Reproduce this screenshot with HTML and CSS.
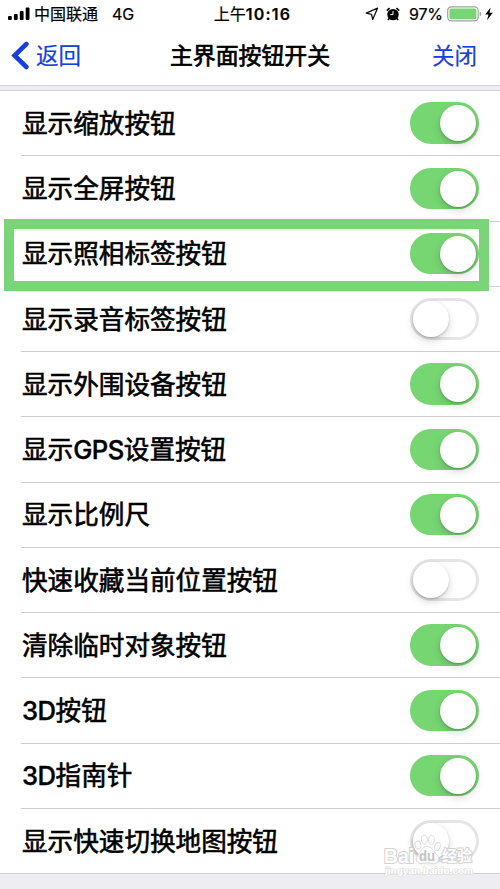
FILE: index.html
```html
<!DOCTYPE html>
<html lang="zh-CN">
<head>
<meta charset="utf-8">
<title>主界面按钮开关</title>
<link rel="stylesheet" href="styles.css">
</head>
<body>
<div class="status">
  <div class="carrier">
    <svg class="signal" width="22" height="14" viewBox="0 0 22 14"><rect x="0" y="9" width="3.8" height="4" rx="1"/><rect x="5.9" y="7" width="3.8" height="6" rx="1"/><rect x="11.8" y="4" width="3.8" height="9" rx="1"/><rect x="17.7" y="0.5" width="3.8" height="12.5" rx="1"/></svg>
    <span>中国联通</span><span class="net">4G</span>
  </div>
  <div class="time">上午<b>10:16</b></div>
  <div class="indicators">
    <svg class="arrow" width="14" height="14" viewBox="0 0 14 14"><path d="M1.2 6.2 12.5 1.2 7.7 12.4 6.5 7.3Z" fill="none" stroke="#111" stroke-width="1.3" stroke-linejoin="round"/></svg>
    <svg class="alarm" width="14" height="14" viewBox="0 0 14 14"><circle cx="7" cy="7.6" r="5.7"/><path d="M.8 3.6 3.6 1.1M13.2 3.6 10.4 1.1M3.2 11.5 1.9 13M10.8 11.5 12.1 13" stroke="#000" stroke-width="1.6"/><path d="M7 4.1V7.6H4.3" fill="none" stroke="#fff" stroke-width="1"/></svg>
    <span class="percent">97%</span>
    <svg class="battery" width="36" height="16" viewBox="0 0 36 16"><rect x=".7" y=".9" width="30.5" height="14" rx="3.6" fill="#fff" stroke="#a0a0a0" stroke-width="1.2"/><rect x="2.4" y="2.6" width="27" height="10.6" rx="1.8" fill="#76d672"/><path d="M32.7 5.5Q34.3 6 34.3 7.9T32.7 10.4Z" fill="#a0a0a0"/></svg>
    <svg class="bolt" width="8" height="14" viewBox="0 0 8 14"><path d="M5.7.6.2 7.5H3.5L2 13.2 7.8 5.8H4.4Z"/></svg>
  </div>
</div>
<header class="nav">
  <a class="back"><svg width="18" height="30" viewBox="0 0 18 30"><path d="M15.4 3 3.6 14.5 15.4 26" fill="none" stroke="#1640dc" stroke-width="4.6" stroke-linecap="round" stroke-linejoin="miter"/></svg><span>返回</span></a>
  <h1>主界面按钮开关</h1>
  <a class="close">关闭</a>
</header>
<main class="list">
  <div class="row"><span>显示缩放按钮</span><i class="switch on"></i></div>
  <div class="row"><span>显示全屏按钮</span><i class="switch on"></i></div>
  <div class="row"><span>显示照相标签按钮</span><i class="switch on"></i><div class="highlight"></div></div>
  <div class="row"><span>显示录音标签按钮</span><i class="switch"></i></div>
  <div class="row"><span>显示外围设备按钮</span><i class="switch on"></i></div>
  <div class="row"><span>显示<b>GPS</b>设置按钮</span><i class="switch on"></i></div>
  <div class="row"><span>显示比例尺</span><i class="switch on"></i></div>
  <div class="row"><span>快速收藏当前位置按钮</span><i class="switch"></i></div>
  <div class="row"><span>清除临时对象按钮</span><i class="switch on"></i></div>
  <div class="row"><span><b>3D</b>按钮</span><i class="switch on"></i></div>
  <div class="row"><span><b>3D</b>指南针</span><i class="switch on"></i></div>
  <div class="row"><span>显示快速切换地图按钮</span><i class="switch"></i></div>
</main>
<div class="watermark">
  <svg width="92" height="44" viewBox="0 0 92 44">
    <g class="paw"><ellipse cx="36" cy="16" rx="2.9" ry="4" transform="rotate(-15 36 16)"/><ellipse cx="42.3" cy="10.6" rx="2.9" ry="4.4"/><ellipse cx="49.5" cy="10.8" rx="2.9" ry="4.4"/><ellipse cx="55.5" cy="17.5" rx="2.8" ry="4" transform="rotate(15 55.5 17.5)"/><path d="M45 17.5C40.5 17.5 39.5 22 36.5 25C32 30 35 35.5 40 34.5Q45.5 33 51 34.5C56 35.5 59 30 54.5 25.5C51 22 50 17.5 45 17.5Z"/></g>
    <text class="brand" x="2" y="33.5" textLength="30" lengthAdjust="spacingAndGlyphs">Bai</text>
    <text class="du" x="37" y="32" textLength="16" lengthAdjust="spacingAndGlyphs">du</text>
    <text class="brand cn" x="60" y="32" textLength="30" lengthAdjust="spacingAndGlyphs">经验</text>
    <text class="site" x="3" y="45" textLength="88" lengthAdjust="spacingAndGlyphs">jingyan.baidu.com</text>
  </svg>
</div>
</body>
</html>
```
FILE: styles.css
```css
* { box-sizing: border-box; }
body {
  margin: 0;
  width: 500px;
  height: 889px;
  overflow: hidden;
  position: relative;
  background: #eeedf2;
  color: #000;
  font-family: Inter, "Noto Sans CJK SC", sans-serif;
}
.status {
  height: 28px;
  background: #fff;
  display: grid;
  grid-template-columns: 1fr auto 1fr;
  align-items: center;
  font-size: 16px;
  line-height: 28px;
}
.carrier { display: flex; align-items: center; padding-left: 8px; -webkit-text-stroke: .2px #000; }
.signal { margin-right: 4px; }
.net { margin-left: 14px; }
.time { padding-left: 5px; -webkit-text-stroke: .2px #000; }
.time b { font-weight: 600; letter-spacing: 1.2px; }
.indicators { display: flex; align-items: center; justify-content: flex-end; padding-right: 7px; }
.alarm { margin-left: 7px; }
.percent { margin-left: 9px; width: 33px; letter-spacing: -.2px; -webkit-text-stroke: .2px #000; }
.battery { margin-left: 5px; }
.bolt { margin-left: 2px; }
.nav {
  height: 58px;
  background: #fff;
  border-bottom: 1px solid #d0cfd4;
  display: grid;
  grid-template-columns: 1fr auto 1fr;
  align-items: center;
  font-size: 22.5px;
  line-height: 56px;
  padding-bottom: 1px;
  color: #1640dc;
}
.back { display: flex; align-items: center; padding-left: 11px; gap: 7px; -webkit-text-stroke: .2px #1640dc; }
.nav h1 {
  margin: 0;
  color: #000;
  font-size: 22.9px;
  font-weight: 400;
  -webkit-text-stroke: .7px #000;
}
.close { text-align: right; padding-right: 23px; -webkit-text-stroke: .2px #1640dc; }
.list {
  margin-top: 4px;
  background: #fff;
  border-top: 1px solid #cfced3;
  border-bottom: 1px solid #cfced3;
}
.row {
  position: relative;
  height: 65.25px;
  margin-left: 21px;
  padding: 0 21.5px 0 1px;
  display: flex;
  align-items: center;
  justify-content: space-between;
  font-size: 25.6px;
  font-weight: 400;
  line-height: 40px;
  -webkit-text-stroke: .6px #000;
  border-bottom: 1px solid #cfced3;
}
.row span { padding-top: 1.5px; }
.row:last-child { border-bottom: 0; height: 64.25px; }
.row b { font-weight: 500; letter-spacing: -.5px; -webkit-text-stroke: .4px #000; }
.switch {
  display: block;
  width: 68.5px;
  height: 41.5px;
  border-radius: 21px;
  border: 3px solid #e5e5e5;
}
.switch::after {
  content: "";
  display: block;
  width: 36px;
  height: 36px;
  margin-left: -.5px;
  border-radius: 50%;
  background: #fff;
  box-shadow: 0 4px 9px rgba(0, 0, 0, .15), 0 1px 2px rgba(0, 0, 0, .22);
}
.switch.on { background: #76d672; border-color: #76d672; }
.switch.on::after { margin-left: 26.8px; }
.highlight {
  position: absolute;
  left: -17px;
  top: -3px;
  width: 485px;
  height: 72px;
  border: 10px solid #79d577;
  z-index: 1;
}
.watermark { position: absolute; left: 382px; top: 829px; width: 92px; height: 44px; z-index: 2; }
.watermark svg { display: block; overflow: visible; }
.paw { fill: rgba(255, 255, 255, .8); stroke: #dcdcdc; stroke-width: 1; }
.brand, .du { font-family: "Liberation Sans", sans-serif; font-weight: 700; font-size: 20px; fill: #fff; stroke: #d2d2d2; stroke-width: 2; paint-order: stroke; }
.du { font-size: 14px; fill: #c4c4c4; stroke: none; }
.cn { font-family: "Noto Sans CJK SC", sans-serif; font-size: 15px; }
.site { font-family: "Liberation Sans", sans-serif; font-weight: 700; font-size: 9.5px; fill: #fff; stroke: #dedede; stroke-width: 1.2; paint-order: stroke; }
```
